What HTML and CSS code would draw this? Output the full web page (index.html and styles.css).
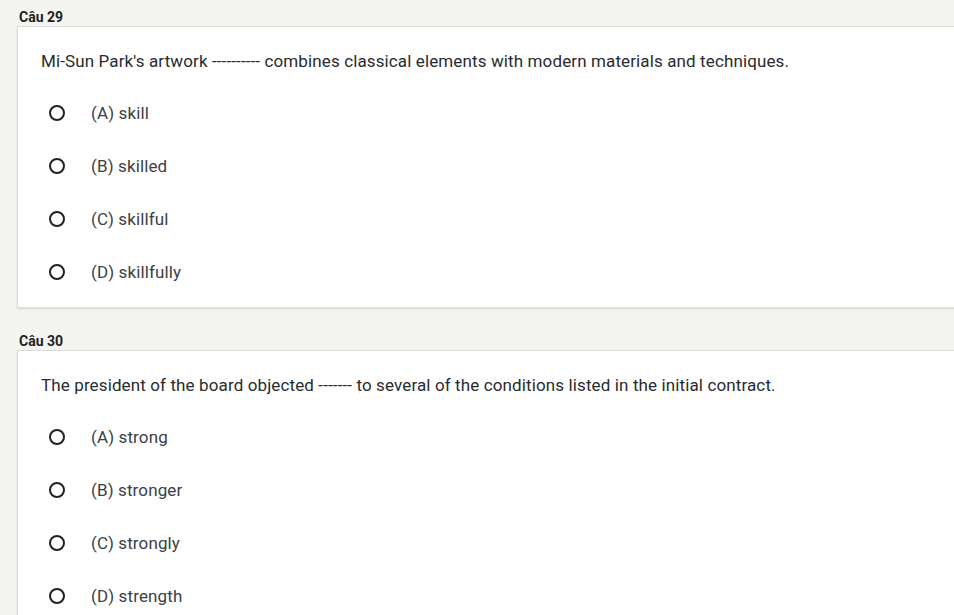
FILE: index.html
```html
<!DOCTYPE html>
<html lang="vi">
<head>
<meta charset="utf-8">
<link rel="stylesheet" href="styles.css">
</head>
<body>
<div class="page">
  <section class="question">
    <h2 class="q-title">Câu 29</h2>
    <div class="card">
      <p class="q-text">Mi-Sun Park's artwork ---------- combines classical elements with modern materials and techniques.</p>
      <ul class="options">
        <li class="option"><span class="radio"></span><span class="label">(A) skill</span></li>
        <li class="option"><span class="radio"></span><span class="label">(B) skilled</span></li>
        <li class="option"><span class="radio"></span><span class="label">(C) skillful</span></li>
        <li class="option"><span class="radio"></span><span class="label">(D) skillfully</span></li>
      </ul>
    </div>
  </section>
  <section class="question">
    <h2 class="q-title">Câu 30</h2>
    <div class="card">
      <p class="q-text">The president of the board objected ------- to several of the conditions listed in the initial contract.</p>
      <ul class="options">
        <li class="option"><span class="radio"></span><span class="label">(A) strong</span></li>
        <li class="option"><span class="radio"></span><span class="label">(B) stronger</span></li>
        <li class="option"><span class="radio"></span><span class="label">(C) strongly</span></li>
        <li class="option"><span class="radio"></span><span class="label">(D) strength</span></li>
      </ul>
    </div>
  </section>
</div>
</body>
</html>
```
FILE: styles.css
```css
html, body {
  margin: 0;
  padding: 0;
  background: #f4f4f1;
  font-family: Roboto, "Liberation Sans", Arial, sans-serif;
  color: #202124;
  overflow: hidden;
}
.page {
  padding: 8px 0 0 17px;
  width: 960px;
}
.question + .question {
  margin-top: 24px;
}
.q-title {
  margin: 0 0 0 2px;
  font-size: 14px;
  font-weight: 700;
  line-height: 18px;
  height: 18px;
  color: #202124;
}
.card {
  background: #fff;
  border: 1px solid #dcdcdc;
  box-shadow: 0 1px 2px rgba(0,0,0,0.12);
  padding: 22px 0 9px 23px;
}
.q-text {
  margin: 0;
  font-size: 17px;
  letter-spacing: 0.12px;
  line-height: 24px;
  color: #2a2b2e;
}
.options {
  list-style: none;
  margin: 13px 0 0 0;
  padding: 0;
}
.option {
  height: 53px;
  display: flex;
  align-items: center;
}
.radio {
  width: 12px;
  height: 12px;
  border: 2px solid #202124;
  border-radius: 50%;
  margin-left: 8px;
  flex: none;
}
.label {
  margin-left: 26px;
  font-size: 17px;
  letter-spacing: 0.12px;
  color: #3c4043;
}
```
